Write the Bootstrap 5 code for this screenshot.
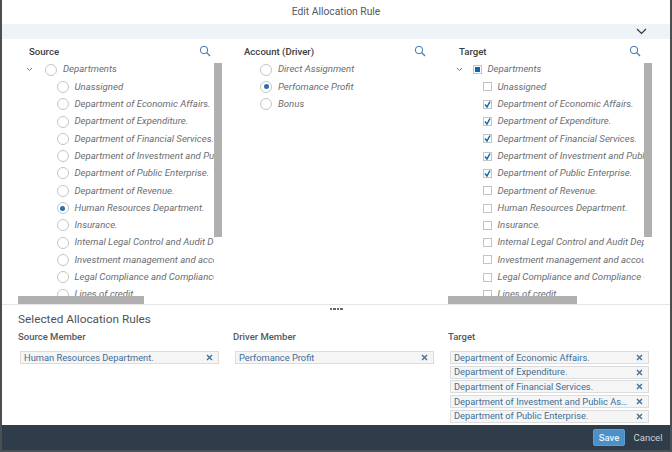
<!DOCTYPE html>
<html lang="en">
<head>
<meta charset="utf-8">
<title>Edit Allocation Rule</title>
<link href="https://cdn.jsdelivr.net/npm/bootstrap@5.3.0/dist/css/bootstrap.min.css" rel="stylesheet">
<style>
html,body{height:452px;overflow:hidden;background:#fff}
body{font-family:Roboto,"Liberation Sans",sans-serif;color:#32363a}
.dlg{width:672px;height:452px;border-left:2px solid #4a4f54;border-right:2px solid #4a4f54;border-bottom:2px solid #4c5155;background:#fff}
.dlg-title{height:24px;font-size:10.3px;color:#54595e}
.dlg-strip{height:15px;background:#edf3f7;padding-right:23px}
.dlg-main{height:266px;padding-left:16px;border-bottom:1px solid #e5e5e5}
.grid3{width:645px}
.pane{height:265px;overflow:hidden;position:relative}
.pane-head{height:22px;padding:6px 22px 0 11px;font-size:9.600px;font-weight:500;color:#3a3e42}
.tree{width:196px;overflow:hidden}
.tree-row{height:17.3px;font-size:9.600px;font-style:italic;color:#6a6d70;white-space:nowrap}
.lvl0{padding-left:6px}
.lvl1{padding-left:38.500px}
.drv{padding-left:27px}
.caret{width:11px;flex:none}
.rd{width:12px;height:12px;border:1.500px solid #c6c6c6;border-radius:50%;flex:none;margin-right:6px;background:#fff}
.rd-on::after{content:"";width:5px;height:5px;background:#2b6ea8;border-radius:50%}
.ck{width:9px;height:9px;border:1px solid #c4c4c4;flex:none;margin:0 5.500px 0 0;background:#fff}
.lv-ck{padding-left:35px}
.lv-ck0{padding-left:6px}
.root-rd{margin-left:10px}
.root-ck{margin-left:8px}
.vbar{position:absolute;top:24px;width:8px;height:174px;background:#b0b0b0}
.hbar{position:absolute;top:257px;height:8px;background:#b0b0b0}
.sash{height:7px;gap:1px;padding-top:3px}
.sash i{width:2.500px;height:2px;background:#666;display:block}
.dlg-sel{height:112px;padding-left:16px}
.sel-title{font-size:11.800px;color:#4f5357;height:15px;line-height:15px;margin-top:0}
.sel-label{font-size:9.500px;font-weight:500;color:#55595d;height:19px;padding-top:3px;line-height:13px}
.tok{height:13px;margin:0 0 1.700px 2px;width:199px;background:#f5f5f5;border:1px solid #dcdcdc;font-size:9.300px;color:#3f6d94;padding:0 3px;white-space:nowrap}
.tok span{overflow:hidden;text-overflow:ellipsis}
.tok svg{flex:none;margin-left:4px;margin-right:2px}
.first-tok{margin-top:5px}
.dlg-foot{height:25px;background:#2f3c49;padding-right:3px}
.btn-save{width:32px;height:17px;background:#4b90c8;border:1px solid #5a9ed2;border-radius:2px;color:#e8f2fa;font-size:9.500px;font-weight:500;padding:0;line-height:14px}
.btn-cancel{width:38px;height:17px;background:transparent;border:0;color:#c8d2da;font-size:9.500px;padding:0;line-height:14px}
</style>
</head>
<body>
<div class="dlg d-flex flex-column">
  <div class="dlg-title d-flex align-items-center justify-content-center">Edit Allocation Rule</div>
  <div class="dlg-strip d-flex align-items-center justify-content-end">
    <svg width="11" height="7" viewBox="0 0 11 7"><path d="M1 1l4.500 4.500L10 1" fill="none" stroke="#32363a" stroke-width="1.200"/></svg>
  </div>
  <div class="dlg-main">
    <div class="row g-0 grid3">
      <div class="col-4 pane">
        <div class="pane-head d-flex justify-content-between">Source
          <svg width="12" height="12" viewBox="0 0 12 12"><circle cx="5" cy="5" r="3.700" fill="none" stroke="#3d78ac"/><path d="M7.700 7.700l3.300 3.300" stroke="#3d78ac" stroke-width="1.200"/></svg></div>
        <div class="tree">
          <div class="tree-row d-flex align-items-center lvl0"><svg class="caret" width="7" height="5" viewBox="0 0 7 5"><path d="M1 1l2.500 2.500L6 1" fill="none" stroke="#4f87b5"/></svg><span class="rd root-rd d-flex align-items-center justify-content-center"></span>Departments</div>
          <div class="tree-row d-flex align-items-center lvl1"><span class="rd d-flex align-items-center justify-content-center"></span>Unassigned</div>
          <div class="tree-row d-flex align-items-center lvl1"><span class="rd d-flex align-items-center justify-content-center"></span>Department of Economic Affairs.</div>
          <div class="tree-row d-flex align-items-center lvl1"><span class="rd d-flex align-items-center justify-content-center"></span>Department of Expenditure.</div>
          <div class="tree-row d-flex align-items-center lvl1"><span class="rd d-flex align-items-center justify-content-center"></span>Department of Financial Services.</div>
          <div class="tree-row d-flex align-items-center lvl1"><span class="rd d-flex align-items-center justify-content-center"></span>Department of Investment and Public Assets.</div>
          <div class="tree-row d-flex align-items-center lvl1"><span class="rd d-flex align-items-center justify-content-center"></span>Department of Public Enterprise.</div>
          <div class="tree-row d-flex align-items-center lvl1"><span class="rd d-flex align-items-center justify-content-center"></span>Department of Revenue.</div>
          <div class="tree-row d-flex align-items-center lvl1"><span class="rd rd-on d-flex align-items-center justify-content-center"></span>Human Resources Department.</div>
          <div class="tree-row d-flex align-items-center lvl1"><span class="rd d-flex align-items-center justify-content-center"></span>Insurance.</div>
          <div class="tree-row d-flex align-items-center lvl1"><span class="rd d-flex align-items-center justify-content-center"></span>Internal Legal Control and Audit Department.</div>
          <div class="tree-row d-flex align-items-center lvl1"><span class="rd d-flex align-items-center justify-content-center"></span>Investment management and accounting.</div>
          <div class="tree-row d-flex align-items-center lvl1"><span class="rd d-flex align-items-center justify-content-center"></span>Legal Compliance and Compliance Office.</div>
          <div class="tree-row d-flex align-items-center lvl1"><span class="rd d-flex align-items-center justify-content-center"></span>Lines of credit</div>
        </div>
        <div class="vbar" style="left:196px"></div>
        <div class="hbar" style="left:0;width:126px"></div>
      </div>
      <div class="col-4 pane">
        <div class="pane-head d-flex justify-content-between">Account (Driver)
          <svg width="12" height="12" viewBox="0 0 12 12"><circle cx="5" cy="5" r="3.700" fill="none" stroke="#3d78ac"/><path d="M7.700 7.700l3.300 3.300" stroke="#3d78ac" stroke-width="1.200"/></svg></div>
        <div class="tree">
          <div class="tree-row d-flex align-items-center drv"><span class="rd d-flex align-items-center justify-content-center"></span>Direct Assignment</div>
          <div class="tree-row d-flex align-items-center drv"><span class="rd rd-on d-flex align-items-center justify-content-center"></span>Perfomance Profit</div>
          <div class="tree-row d-flex align-items-center drv"><span class="rd d-flex align-items-center justify-content-center"></span>Bonus</div>
        </div>
      </div>
      <div class="col-4 pane">
        <div class="pane-head d-flex justify-content-between">Target
          <svg width="12" height="12" viewBox="0 0 12 12"><circle cx="5" cy="5" r="3.700" fill="none" stroke="#3d78ac"/><path d="M7.700 7.700l3.300 3.300" stroke="#3d78ac" stroke-width="1.200"/></svg></div>
        <div class="tree">
          <div class="tree-row d-flex align-items-center lv-ck0"><svg class="caret" width="7" height="5" viewBox="0 0 7 5"><path d="M1 1l2.500 2.500L6 1" fill="none" stroke="#4f87b5"/></svg><span class="ck root-ck d-flex align-items-center justify-content-center"><svg width="5" height="5"><rect width="5" height="5" fill="#0a6ab0"/></svg></span>Departments</div>
          <div class="tree-row d-flex align-items-center lv-ck"><span class="ck"></span>Unassigned</div>
          <div class="tree-row d-flex align-items-center lv-ck"><span class="ck d-flex align-items-center justify-content-center"><svg width="7" height="7" viewBox="0 0 7 7"><path d="M1 3.500l2 2.500L6 .5" fill="none" stroke="#0a6ab0" stroke-width="1.500"/></svg></span>Department of Economic Affairs.</div>
          <div class="tree-row d-flex align-items-center lv-ck"><span class="ck d-flex align-items-center justify-content-center"><svg width="7" height="7" viewBox="0 0 7 7"><path d="M1 3.500l2 2.500L6 .5" fill="none" stroke="#0a6ab0" stroke-width="1.500"/></svg></span>Department of Expenditure.</div>
          <div class="tree-row d-flex align-items-center lv-ck"><span class="ck d-flex align-items-center justify-content-center"><svg width="7" height="7" viewBox="0 0 7 7"><path d="M1 3.500l2 2.500L6 .5" fill="none" stroke="#0a6ab0" stroke-width="1.500"/></svg></span>Department of Financial Services.</div>
          <div class="tree-row d-flex align-items-center lv-ck"><span class="ck d-flex align-items-center justify-content-center"><svg width="7" height="7" viewBox="0 0 7 7"><path d="M1 3.500l2 2.500L6 .5" fill="none" stroke="#0a6ab0" stroke-width="1.500"/></svg></span>Department of Investment and Public Assets.</div>
          <div class="tree-row d-flex align-items-center lv-ck"><span class="ck d-flex align-items-center justify-content-center"><svg width="7" height="7" viewBox="0 0 7 7"><path d="M1 3.500l2 2.500L6 .5" fill="none" stroke="#0a6ab0" stroke-width="1.500"/></svg></span>Department of Public Enterprise.</div>
          <div class="tree-row d-flex align-items-center lv-ck"><span class="ck"></span>Department of Revenue.</div>
          <div class="tree-row d-flex align-items-center lv-ck"><span class="ck"></span>Human Resources Department.</div>
          <div class="tree-row d-flex align-items-center lv-ck"><span class="ck"></span>Insurance.</div>
          <div class="tree-row d-flex align-items-center lv-ck"><span class="ck"></span>Internal Legal Control and Audit Department.</div>
          <div class="tree-row d-flex align-items-center lv-ck"><span class="ck"></span>Investment management and accounting.</div>
          <div class="tree-row d-flex align-items-center lv-ck"><span class="ck"></span>Legal Compliance and Compliance Office.</div>
          <div class="tree-row d-flex align-items-center lv-ck"><span class="ck"></span>Lines of credit</div>
        </div>
        <div class="vbar" style="left:196px"></div>
        <div class="hbar" style="left:0;width:129px"></div>
      </div>
    </div>
  </div>
  <div class="sash d-flex justify-content-center"><i></i><i></i><i></i><i></i></div>
  <div class="dlg-sel">
    <div class="sel-title">Selected Allocation Rules</div>
    <div class="row g-0 grid3">
      <div class="col-4">
        <div class="sel-label">Source Member</div>
        <div class="tok first-tok d-flex align-items-center justify-content-between"><span>Human Resources Department.</span><svg width="7" height="7" viewBox="0 0 7 7"><path d="M1 1l5 5M6 1L1 6" stroke="#3f6d94" stroke-width="1.300"/></svg></div>
      </div>
      <div class="col-4">
        <div class="sel-label">Driver Member</div>
        <div class="tok first-tok d-flex align-items-center justify-content-between"><span>Perfomance Profit</span><svg width="7" height="7" viewBox="0 0 7 7"><path d="M1 1l5 5M6 1L1 6" stroke="#3f6d94" stroke-width="1.300"/></svg></div>
      </div>
      <div class="col-4">
        <div class="sel-label">Target</div>
        <div class="tok first-tok d-flex align-items-center justify-content-between"><span>Department of Economic Affairs.</span><svg width="7" height="7" viewBox="0 0 7 7"><path d="M1 1l5 5M6 1L1 6" stroke="#3f6d94" stroke-width="1.300"/></svg></div>
        <div class="tok d-flex align-items-center justify-content-between"><span>Department of Expenditure.</span><svg width="7" height="7" viewBox="0 0 7 7"><path d="M1 1l5 5M6 1L1 6" stroke="#3f6d94" stroke-width="1.300"/></svg></div>
        <div class="tok d-flex align-items-center justify-content-between"><span>Department of Financial Services.</span><svg width="7" height="7" viewBox="0 0 7 7"><path d="M1 1l5 5M6 1L1 6" stroke="#3f6d94" stroke-width="1.300"/></svg></div>
        <div class="tok d-flex align-items-center justify-content-between"><span>Department of Investment and Public Assets.</span><svg width="7" height="7" viewBox="0 0 7 7"><path d="M1 1l5 5M6 1L1 6" stroke="#3f6d94" stroke-width="1.300"/></svg></div>
        <div class="tok d-flex align-items-center justify-content-between"><span>Department of Public Enterprise.</span><svg width="7" height="7" viewBox="0 0 7 7"><path d="M1 1l5 5M6 1L1 6" stroke="#3f6d94" stroke-width="1.300"/></svg></div>
      </div>
    </div>
  </div>
  <div class="dlg-foot d-flex align-items-center justify-content-end gap-1 mt-auto">
    <button class="btn btn-save">Save</button>
    <button class="btn btn-cancel">Cancel</button>
  </div>
</div>
<script src="https://cdn.jsdelivr.net/npm/bootstrap@5.3.0/dist/js/bootstrap.bundle.min.js"></script>
</body>
</html>
